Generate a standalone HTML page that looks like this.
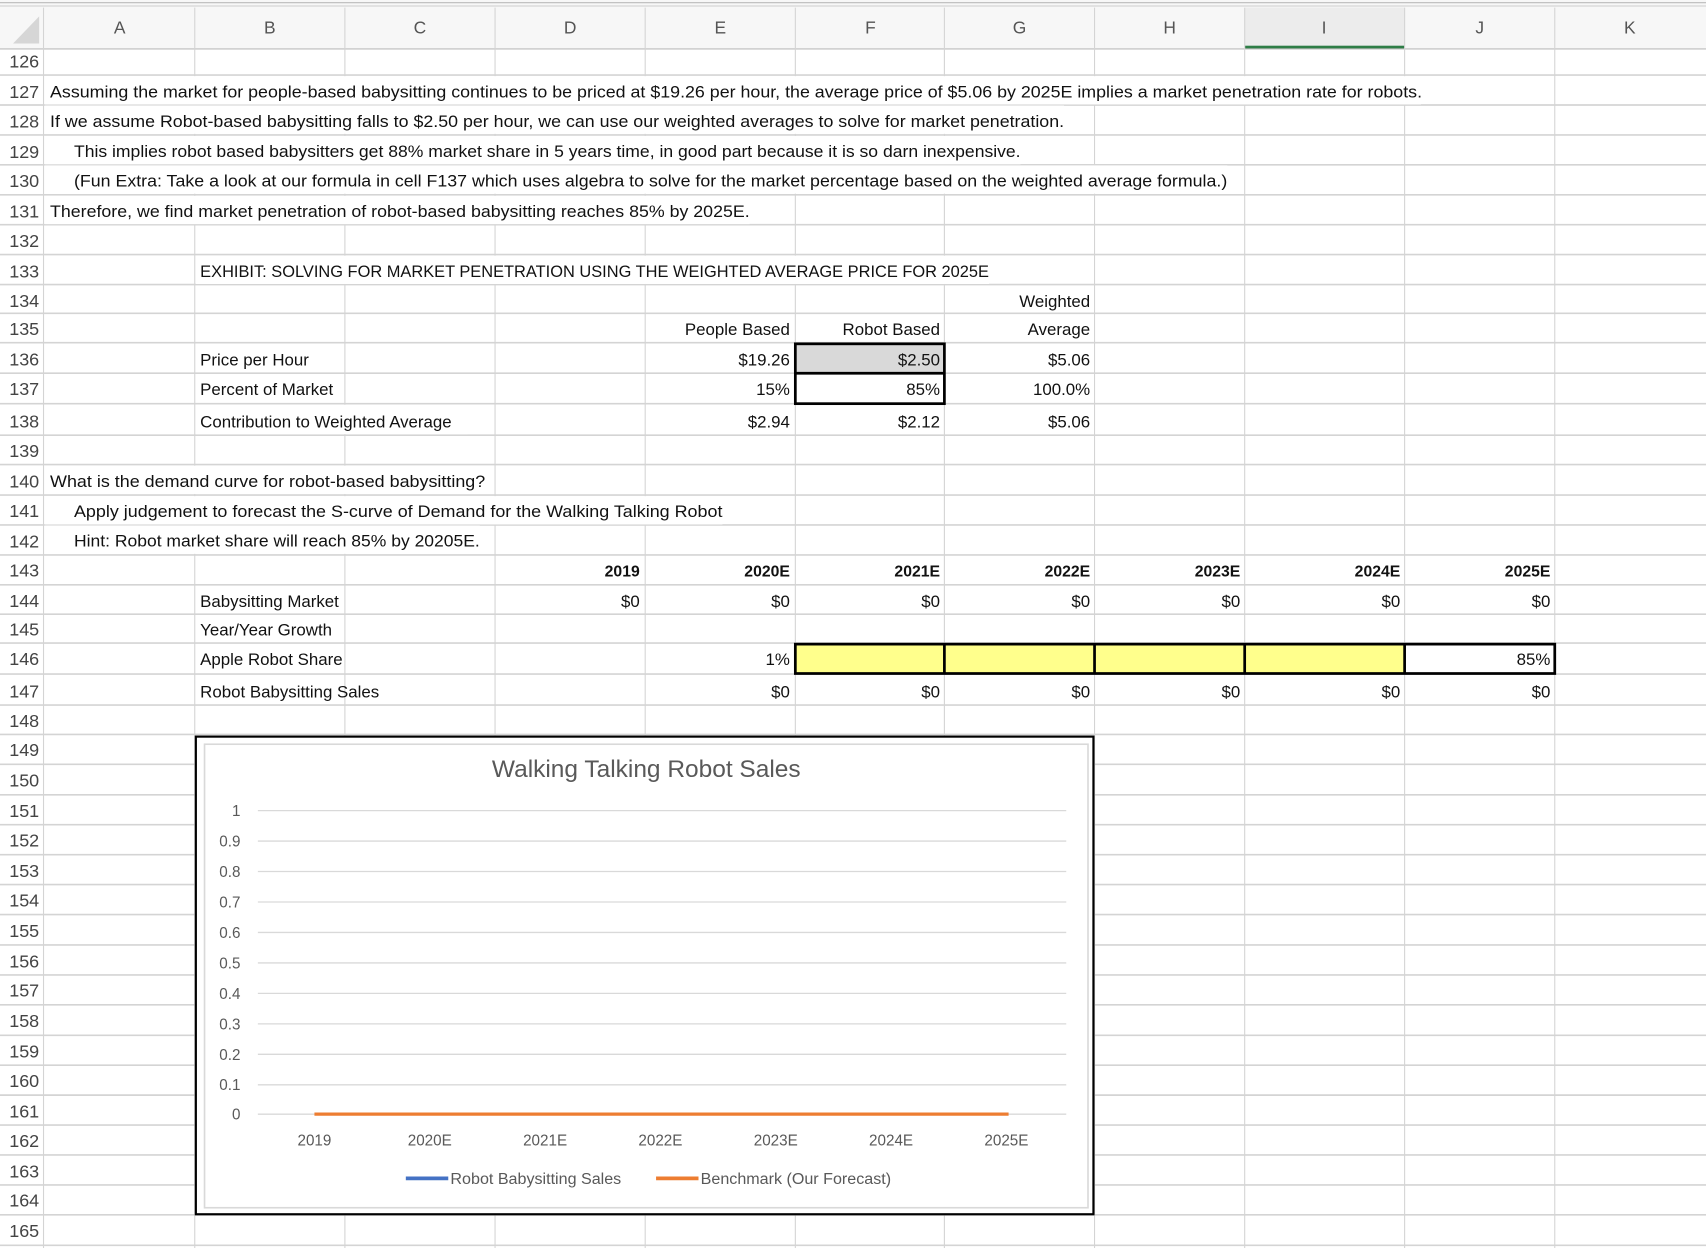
<!DOCTYPE html>
<html><head><meta charset="utf-8"><style>
html,body{margin:0;padding:0;background:#fff;width:1706px;height:1248px;overflow:hidden}
svg{display:block}
text{font-family:"Liberation Sans",sans-serif;font-size:15.5px;fill:#111}
.r{text-anchor:end}
.h{fill:#555;font-size:16px;text-anchor:middle}
.rn{fill:#444;font-size:16.5px;text-anchor:end}
.b{font-weight:bold;font-size:14.5px}
.ax{fill:#595959;font-size:14px}
</style></head><body>
<svg width="1706" height="1248" viewBox="0 0 1568 1147" preserveAspectRatio="none">
<rect width="1568" height="1147" fill="#fff"/>
<rect x="0" y="0" width="1568" height="45" fill="#f7f7f7"/>
<line x1="0" y1="2.5" x2="1568" y2="2.5" stroke="#bbb" stroke-width="1"/>
<line x1="0" y1="5.5" x2="1568" y2="5.5" stroke="#ccc" stroke-width="1"/>
<rect x="1144" y="7" width="147" height="38" fill="#ececec"/>
<rect x="1144" y="42" width="147" height="3" fill="#2e7d46"/>
<polygon points="12,40 36,40 36,15" fill="#d6d6d6"/>
<line x1="0" y1="45" x2="1568" y2="45" stroke="#bbb" stroke-width="1"/>
<g stroke="#d4d4d4" stroke-width="1">
<line x1="40" y1="7" x2="40" y2="1147"/><line x1="179" y1="7" x2="179" y2="1147"/><line x1="317" y1="7" x2="317" y2="1147"/><line x1="455" y1="7" x2="455" y2="1147"/><line x1="593" y1="7" x2="593" y2="1147"/><line x1="731" y1="7" x2="731" y2="1147"/><line x1="868" y1="7" x2="868" y2="1147"/><line x1="1006" y1="7" x2="1006" y2="1147"/><line x1="1144" y1="7" x2="1144" y2="1147"/><line x1="1291" y1="7" x2="1291" y2="1147"/><line x1="1429" y1="7" x2="1429" y2="1147"/>
</g>
<g stroke="#d4d4d4" stroke-width="1.5">
<line x1="0" y1="69" x2="1568" y2="69"/><line x1="0" y1="96.5" x2="1568" y2="96.5"/><line x1="0" y1="124" x2="1568" y2="124"/><line x1="0" y1="151.5" x2="1568" y2="151.5"/><line x1="0" y1="179" x2="1568" y2="179"/><line x1="0" y1="206.5" x2="1568" y2="206.5"/><line x1="0" y1="234" x2="1568" y2="234"/><line x1="0" y1="261.5" x2="1568" y2="261.5"/><line x1="0" y1="288" x2="1568" y2="288"/><line x1="0" y1="315" x2="1568" y2="315"/><line x1="0" y1="343" x2="1568" y2="343"/><line x1="0" y1="371" x2="1568" y2="371"/><line x1="0" y1="400" x2="1568" y2="400"/><line x1="0" y1="427" x2="1568" y2="427"/><line x1="0" y1="455" x2="1568" y2="455"/><line x1="0" y1="482.5" x2="1568" y2="482.5"/><line x1="0" y1="510" x2="1568" y2="510"/><line x1="0" y1="537.5" x2="1568" y2="537.5"/><line x1="0" y1="564.5" x2="1568" y2="564.5"/><line x1="0" y1="591" x2="1568" y2="591"/><line x1="0" y1="619.5" x2="1568" y2="619.5"/><line x1="0" y1="648" x2="1568" y2="648"/><line x1="0" y1="675" x2="1568" y2="675"/><line x1="0" y1="702.5" x2="1568" y2="702.5"/><line x1="0" y1="730.5" x2="1568" y2="730.5"/><line x1="0" y1="758" x2="1568" y2="758"/><line x1="0" y1="785.5" x2="1568" y2="785.5"/><line x1="0" y1="813" x2="1568" y2="813"/><line x1="0" y1="840.5" x2="1568" y2="840.5"/><line x1="0" y1="868.5" x2="1568" y2="868.5"/><line x1="0" y1="896" x2="1568" y2="896"/><line x1="0" y1="923.5" x2="1568" y2="923.5"/><line x1="0" y1="951.5" x2="1568" y2="951.5"/><line x1="0" y1="979" x2="1568" y2="979"/><line x1="0" y1="1006.5" x2="1568" y2="1006.5"/><line x1="0" y1="1034" x2="1568" y2="1034"/><line x1="0" y1="1061.5" x2="1568" y2="1061.5"/><line x1="0" y1="1089" x2="1568" y2="1089"/><line x1="0" y1="1116.5" x2="1568" y2="1116.5"/><line x1="0" y1="1144.5" x2="1568" y2="1144.5"/>
</g>
<rect x="41" y="70" width="1265" height="26" fill="#fff"/>
<rect x="41" y="97" width="937" height="26" fill="#fff"/>
<rect x="41" y="125" width="897" height="26" fill="#fff"/>
<rect x="41" y="152" width="1087" height="26" fill="#fff"/>
<rect x="41" y="180" width="648" height="26" fill="#fff"/>
<rect x="180" y="235" width="729" height="26" fill="#fff"/>
<rect x="180" y="372" width="250" height="27" fill="#fff"/>
<rect x="41" y="428" width="405" height="26" fill="#fff"/>
<rect x="41" y="456" width="623" height="26" fill="#fff"/>
<rect x="41" y="483" width="400" height="26" fill="#fff"/>

<g>
<text class="h" x="110" y="31">A</text><text class="h" x="248" y="31">B</text><text class="h" x="386" y="31">C</text><text class="h" x="524" y="31">D</text><text class="h" x="662" y="31">E</text><text class="h" x="800" y="31">F</text><text class="h" x="937" y="31">G</text><text class="h" x="1075" y="31">H</text><text class="h" x="1217" y="31">I</text><text class="h" x="1360" y="31">J</text><text class="h" x="1498" y="31">K</text>
</g>
<g>
<text class="rn" x="36" y="62">126</text><text class="rn" x="36" y="90">127</text><text class="rn" x="36" y="117">128</text><text class="rn" x="36" y="145">129</text><text class="rn" x="36" y="172">130</text><text class="rn" x="36" y="200">131</text><text class="rn" x="36" y="227">132</text><text class="rn" x="36" y="255">133</text><text class="rn" x="36" y="282">134</text><text class="rn" x="36" y="308">135</text><text class="rn" x="36" y="336">136</text><text class="rn" x="36" y="363">137</text><text class="rn" x="36" y="393">138</text><text class="rn" x="36" y="420">139</text><text class="rn" x="36" y="448">140</text><text class="rn" x="36" y="475">141</text><text class="rn" x="36" y="503">142</text><text class="rn" x="36" y="530">143</text><text class="rn" x="36" y="558">144</text><text class="rn" x="36" y="584">145</text><text class="rn" x="36" y="611">146</text><text class="rn" x="36" y="641">147</text><text class="rn" x="36" y="668">148</text><text class="rn" x="36" y="695">149</text><text class="rn" x="36" y="723">150</text><text class="rn" x="36" y="751">151</text><text class="rn" x="36" y="778">152</text><text class="rn" x="36" y="806">153</text><text class="rn" x="36" y="833">154</text><text class="rn" x="36" y="861">155</text><text class="rn" x="36" y="889">156</text><text class="rn" x="36" y="916">157</text><text class="rn" x="36" y="944">158</text><text class="rn" x="36" y="972">159</text><text class="rn" x="36" y="999">160</text><text class="rn" x="36" y="1027">161</text><text class="rn" x="36" y="1054">162</text><text class="rn" x="36" y="1082">163</text><text class="rn" x="36" y="1109">164</text><text class="rn" x="36" y="1137">165</text>
</g>

<text x="46" y="89.5" textLength="1261" lengthAdjust="spacingAndGlyphs">Assuming the market for people-based babysitting continues to be priced at $19.26 per hour, the average price of $5.06 by 2025E implies a market penetration rate for robots.</text>
<text x="46" y="116.5" textLength="932" lengthAdjust="spacingAndGlyphs">If we assume Robot-based babysitting falls to $2.50 per hour, we can use our weighted averages to solve for market penetration.</text>
<text x="68" y="144.5" textLength="870" lengthAdjust="spacingAndGlyphs">This implies robot based babysitters get 88% market share in 5 years time, in good part because it is so darn inexpensive.</text>
<text x="68" y="171.5" textLength="1060" lengthAdjust="spacingAndGlyphs">(Fun Extra: Take a look at our formula in cell F137 which uses algebra to solve for the market percentage based on the weighted average formula.)</text>
<text x="46" y="199.5" textLength="643" lengthAdjust="spacingAndGlyphs">Therefore, we find market penetration of robot-based babysitting reaches 85% by 2025E.</text>
<text x="184" y="254.5" textLength="725" lengthAdjust="spacingAndGlyphs">EXHIBIT: SOLVING FOR MARKET PENETRATION USING THE WEIGHTED AVERAGE PRICE FOR 2025E</text>

<text class="r" x="1002" y="282">Weighted</text>
<text class="r" x="726" y="308">People Based</text><text class="r" x="864" y="308">Robot Based</text><text class="r" x="1002" y="308">Average</text>

<rect x="731" y="316" width="137" height="27" fill="#d9d9d9"/>
<rect x="731" y="316" width="137" height="55" fill="none" stroke="#000" stroke-width="2.5"/>
<line x1="731" y1="343" x2="868" y2="343" stroke="#000" stroke-width="2.5"/>
<text x="184" y="336">Price per Hour</text><text class="r" x="726" y="336">$19.26</text><text class="r" x="864" y="336">$2.50</text><text class="r" x="1002" y="336">$5.06</text>
<text x="184" y="363">Percent of Market</text><text class="r" x="726" y="363">15%</text><text class="r" x="864" y="363">85%</text><text class="r" x="1002" y="363">100.0%</text>
<text x="184" y="393">Contribution to Weighted Average</text><text class="r" x="726" y="393">$2.94</text><text class="r" x="864" y="393">$2.12</text><text class="r" x="1002" y="393">$5.06</text>

<text x="46" y="447.5" textLength="400" lengthAdjust="spacingAndGlyphs">What is the demand curve for robot-based babysitting?</text>
<text x="68" y="475" textLength="596" lengthAdjust="spacingAndGlyphs">Apply judgement to forecast the S-curve of Demand for the Walking Talking Robot</text>
<text x="68" y="502.5" textLength="373" lengthAdjust="spacingAndGlyphs">Hint: Robot market share will reach 85% by 20205E.</text>

<text class="r b" x="588" y="530">2019</text><text class="r b" x="726" y="530">2020E</text><text class="r b" x="864" y="530">2021E</text><text class="r b" x="1002" y="530">2022E</text><text class="r b" x="1140" y="530">2023E</text><text class="r b" x="1287" y="530">2024E</text><text class="r b" x="1425" y="530">2025E</text>
<text x="184" y="558">Babysitting Market</text>
<text class="r" x="588" y="558">$0</text><text class="r" x="726" y="558">$0</text><text class="r" x="864" y="558">$0</text><text class="r" x="1002" y="558">$0</text><text class="r" x="1140" y="558">$0</text><text class="r" x="1287" y="558">$0</text><text class="r" x="1425" y="558">$0</text>
<text x="184" y="584">Year/Year Growth</text>

<rect x="731" y="592" width="560" height="27" fill="#ffff8c"/>
<rect x="731" y="592" width="698" height="27" fill="none" stroke="#000" stroke-width="2.5"/>
<g stroke="#000" stroke-width="2.5"><line x1="868" y1="592" x2="868" y2="619"/><line x1="1006" y1="592" x2="1006" y2="619"/><line x1="1144" y1="592" x2="1144" y2="619"/><line x1="1291" y1="592" x2="1291" y2="619"/></g>
<text x="184" y="611">Apple Robot Share</text><text class="r" x="726" y="611">1%</text><text class="r" x="1425" y="611">85%</text>
<text x="184" y="641">Robot Babysitting Sales</text>
<text class="r" x="726" y="641">$0</text><text class="r" x="864" y="641">$0</text><text class="r" x="1002" y="641">$0</text><text class="r" x="1140" y="641">$0</text><text class="r" x="1287" y="641">$0</text><text class="r" x="1425" y="641">$0</text>

<rect x="180" y="677" width="825" height="439" fill="#fff" stroke="#000" stroke-width="2"/>
<rect x="188" y="684" width="812" height="426" fill="none" stroke="#d9d9d9" stroke-width="1.5"/>
<text x="594" y="714" style="font-size:22.5px;fill:#595959;text-anchor:middle">Walking Talking Robot Sales</text>
<g stroke="#d9d9d9" stroke-width="1.2">
<line x1="237" y1="745" x2="980" y2="745"/><line x1="237" y1="773" x2="980" y2="773"/><line x1="237" y1="801" x2="980" y2="801"/><line x1="237" y1="829" x2="980" y2="829"/><line x1="237" y1="857" x2="980" y2="857"/><line x1="237" y1="885" x2="980" y2="885"/><line x1="237" y1="913" x2="980" y2="913"/><line x1="237" y1="941" x2="980" y2="941"/><line x1="237" y1="969" x2="980" y2="969"/><line x1="237" y1="997" x2="980" y2="997"/><line x1="237" y1="1024" x2="980" y2="1024"/>
</g>
<text class="ax r" x="221" y="750">1</text><text class="ax r" x="221" y="778">0.9</text><text class="ax r" x="221" y="806">0.8</text><text class="ax r" x="221" y="834">0.7</text><text class="ax r" x="221" y="862">0.6</text><text class="ax r" x="221" y="890">0.5</text><text class="ax r" x="221" y="918">0.4</text><text class="ax r" x="221" y="946">0.3</text><text class="ax r" x="221" y="974">0.2</text><text class="ax r" x="221" y="1002">0.1</text><text class="ax r" x="221" y="1029">0</text>
<line x1="289" y1="1024" x2="927" y2="1024" stroke="#ed7d31" stroke-width="3"/>
<text class="ax" x="289" y="1053" text-anchor="middle">2019</text><text class="ax" x="395" y="1053" text-anchor="middle">2020E</text><text class="ax" x="501" y="1053" text-anchor="middle">2021E</text><text class="ax" x="607" y="1053" text-anchor="middle">2022E</text><text class="ax" x="713" y="1053" text-anchor="middle">2023E</text><text class="ax" x="819" y="1053" text-anchor="middle">2024E</text><text class="ax" x="925" y="1053" text-anchor="middle">2025E</text>
<line x1="373" y1="1083" x2="412" y2="1083" stroke="#4472c4" stroke-width="3.5"/>
<text class="ax" x="414" y="1088" textLength="157" lengthAdjust="spacingAndGlyphs">Robot Babysitting Sales</text>
<line x1="603" y1="1083" x2="642" y2="1083" stroke="#ed7d31" stroke-width="3.5"/>
<text class="ax" x="644" y="1088" textLength="175" lengthAdjust="spacingAndGlyphs">Benchmark (Our Forecast)</text>
</svg>
</body></html>
